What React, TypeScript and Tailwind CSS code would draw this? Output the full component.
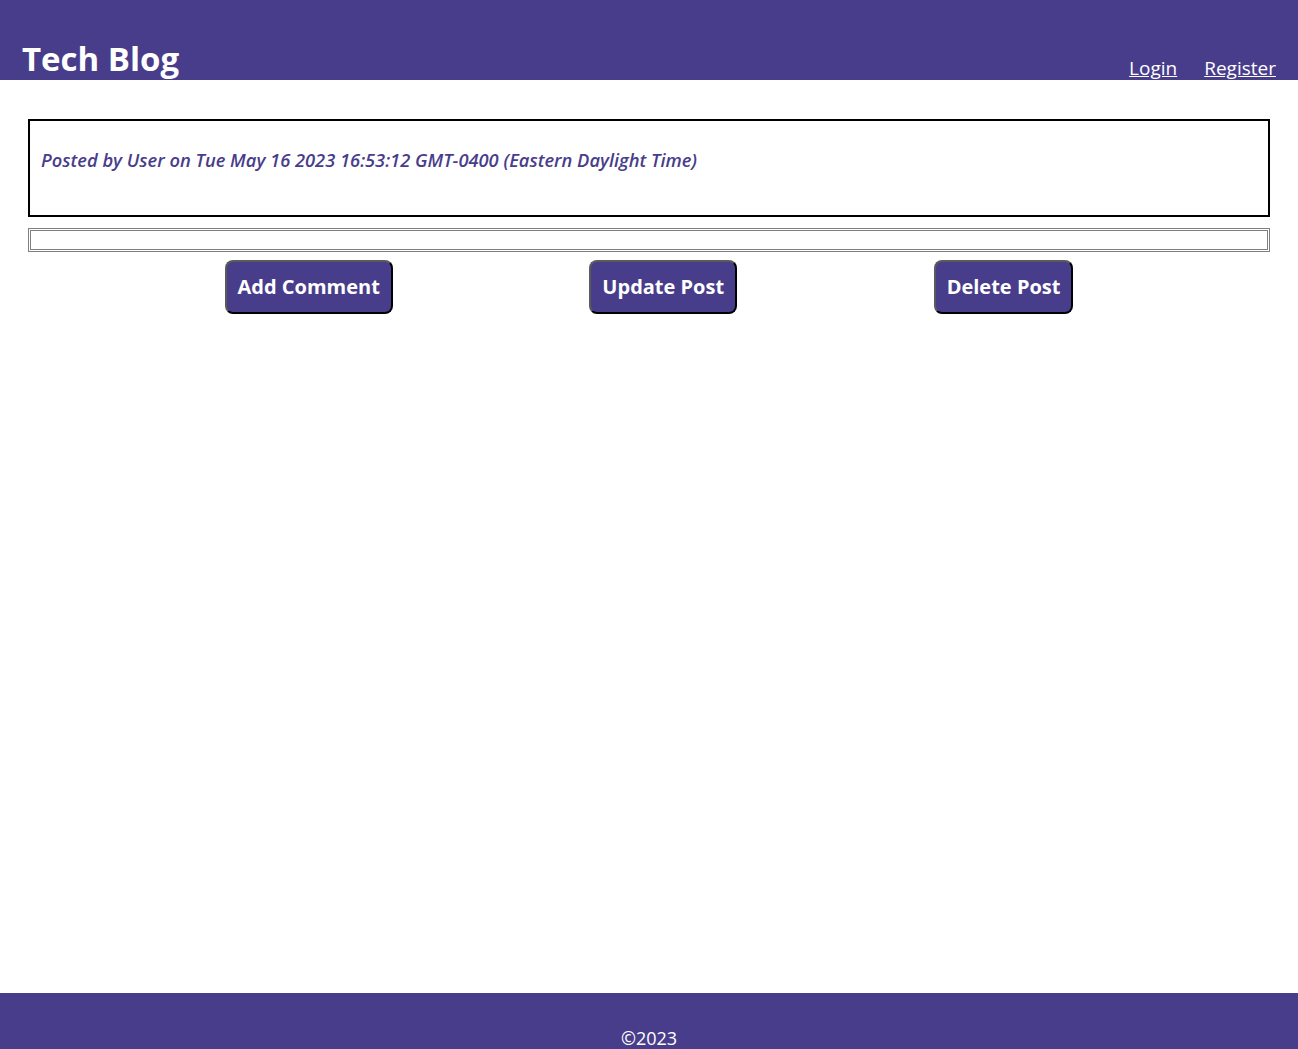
const FONT = "font-['Open_Sans',sans-serif]";

function ActionButton({ label }: { label: string }) {
  return (
    <button
      className="h-[54px] px-[11px] rounded-lg bg-[#483d8b] text-white font-bold text-[20px] border-2 border-[#5a5a5a] border-r-black border-b-black"
    >
      {label}
    </button>
  );
}

export default function App() {
  return (
    <div className={`min-h-[1049px] flex flex-col bg-white ${FONT}`}>
      <header className="h-20 bg-[#483d8b] flex items-end justify-between pl-[22px] pr-[22px] overflow-hidden">
        <h1 className="text-[33px] font-bold text-white leading-none -translate-y-[5px]">Tech Blog</h1>
        <nav className="flex gap-[27px] text-[19px] text-white leading-none pb-[2px]">
          <a href="#" className="underline">Login</a>
          <a href="#" className="underline">Register</a>
        </nav>
      </header>

      <main className="flex-1 px-[28px] pt-[39px]">
        <div className="border-2 border-black h-[98px] px-[11px] pt-[25px]">
          <p className="italic font-semibold text-[18.3px] text-[#483d8b]">
            Posted by User on Tue May 16 2023 16:53:12 GMT-0400 (Eastern Daylight Time)
          </p>
        </div>

        <div className="mt-[11px] h-[24px] border-[3px] border-double border-[#808080]" />

        <div className="mt-[8px] flex justify-evenly">
          <ActionButton label="Add Comment" />
          <ActionButton label="Update Post" />
          <ActionButton label="Delete Post" />
        </div>
      </main>

      <footer className="h-14 bg-[#483d8b] flex items-end justify-center">
        <span className="text-white text-[18px] leading-none pb-[2px]">©2023</span>
      </footer>
    </div>
  );
}
